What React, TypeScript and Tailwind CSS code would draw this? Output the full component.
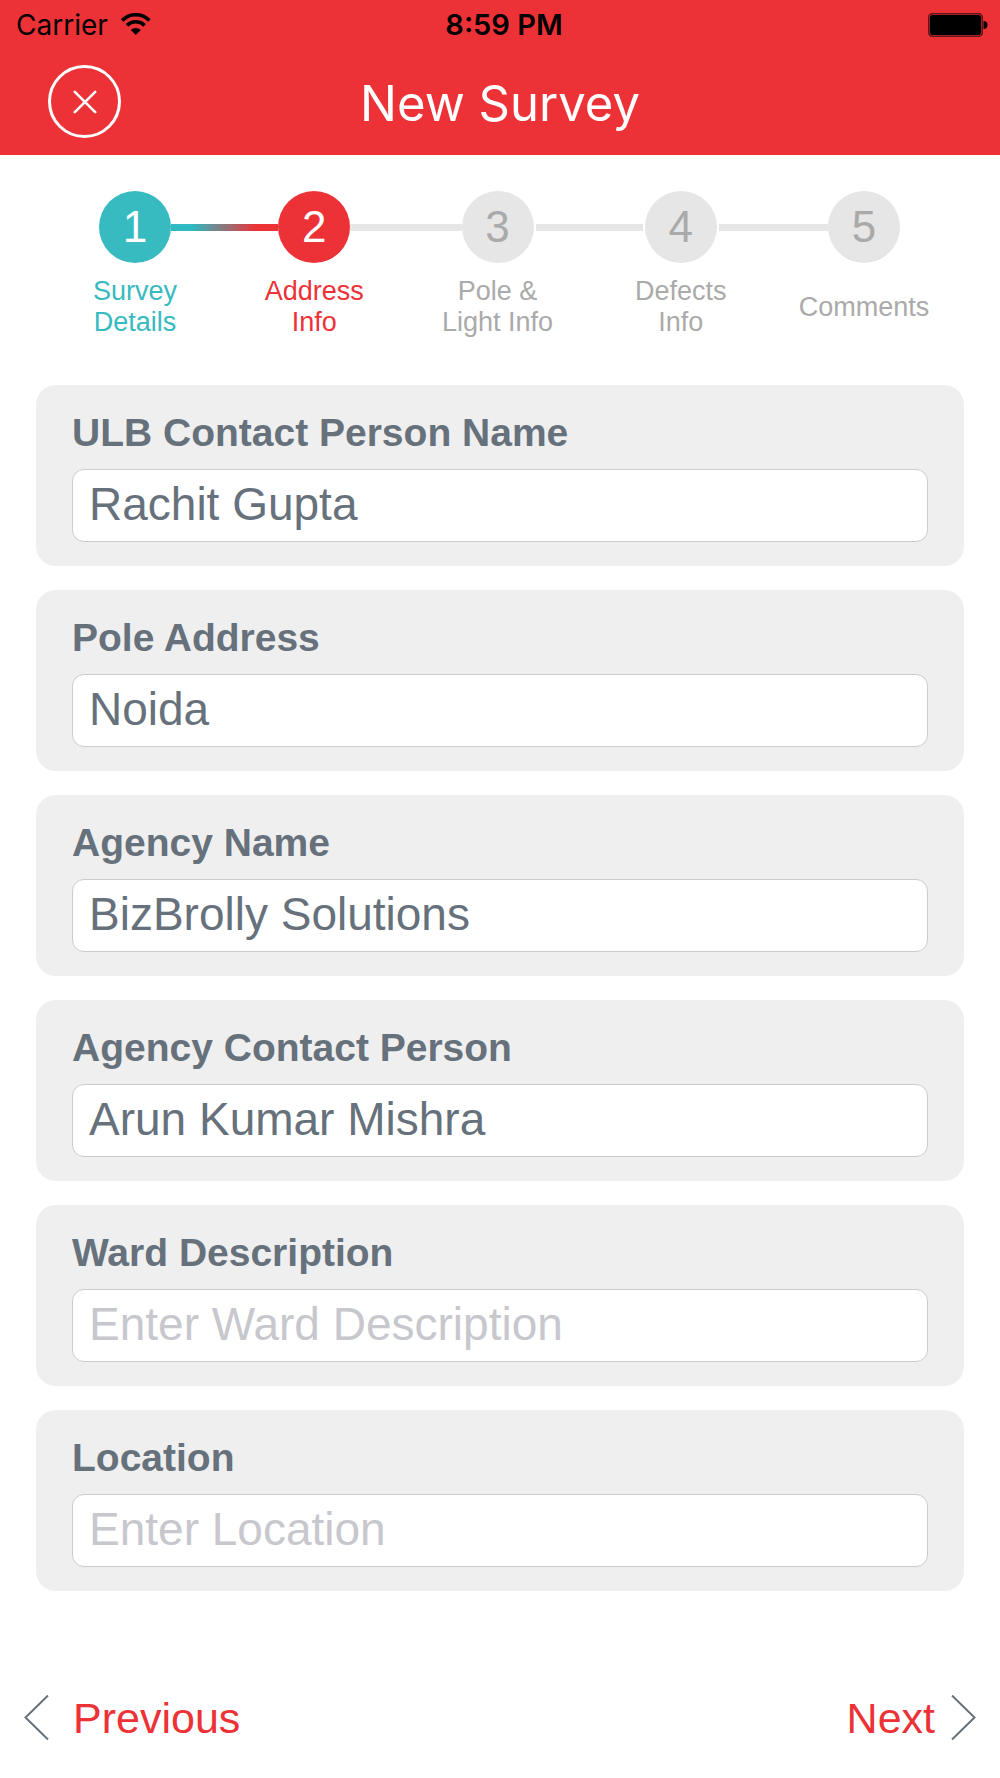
import { useState } from "react";
import clsx from "clsx";

type TStep = {
  title: string[];
  circle: string;
  text: string;
  grow?: string;
  line?: string;
};

type TField = {
  id: string;
  label: string;
  value: string;
};

const steps: TStep[] = [
  {
    title: ["Survey", "Details"],
    circle: "bg-[#37bac0] text-white",
    text: "text-[#37bac0]",
    grow: "basis-18 grow-[107]",
    line: "bg-linear-to-r/srgb from-[#2fb9c0] from-20% to-[#ed3237] to-80%",
  },
  {
    title: ["Address", "Info"],
    circle: "bg-[#ed3237] text-white",
    text: "text-[#ed3237]",
    grow: "basis-18 grow-[111]",
    line: "bg-[#e6e6e6]",
  },
  {
    title: ["Pole &", "Light Info"],
    circle: "bg-[#e6e6e6] text-[#aaaaaa]",
    text: "text-[#aaaaaa]",
    grow: "basis-18 grow-[111]",
    line: "border-x-2 border-white bg-[#e6e6e6]",
  },
  {
    title: ["Defects", "Info"],
    circle: "bg-[#e6e6e6] text-[#aaaaaa]",
    text: "text-[#aaaaaa]",
    grow: "basis-18 grow-[111]",
    line: "border-l-2 border-white bg-[#e6e6e6]",
  },
  {
    title: ["Comments"],
    circle: "bg-[#e6e6e6] text-[#aaaaaa]",
    text: "text-[#aaaaaa]",
  },
];

const initialFields: TField[] = [
  { id: "contactPerson", label: "ULB Contact Person Name", value: "Rachit Gupta" },
  { id: "poleAddress", label: "Pole Address", value: "Noida" },
  { id: "agencyName", label: "Agency Name", value: "BizBrolly Solutions" },
  { id: "agencyContact", label: "Agency Contact Person", value: "Arun Kumar Mishra" },
  { id: "ward", label: "Ward Description", value: "" },
  { id: "location", label: "Location", value: "" },
];

const StatusBar = () => (
  <div className="grid h-[50px] grid-cols-3 items-center pl-4 pr-3 text-[28px] leading-8 text-black">
    <div className="flex items-center gap-3">
      <span>Carrier</span>
      <svg width="32" height="24" viewBox="0 0 32 24" fill="none" aria-hidden="true">
        <path d="M2.2 7.4 A19.2 19.2 0 0 1 29.4 7.4" stroke="black" strokeWidth="3.6" />
        <path d="M7 12.4 A12.6 12.6 0 0 1 24.6 12.4" stroke="black" strokeWidth="3.6" />
        <path d="M15.8 22 L10.8 17 A7.1 7.1 0 0 1 20.8 17 Z" fill="black" />
      </svg>
    </div>
    <span className="pl-1 text-center text-[29px] font-semibold">8:59 PM</span>
    <svg className="justify-self-end" width="60" height="24" viewBox="0 0 60 24" aria-hidden="true">
      <rect x="0.8" y="0.8" width="53.4" height="22.4" rx="3.5" fill="#ed3237" stroke="#5e1518" strokeWidth="1.6" />
      <rect x="2" y="2" width="51" height="20" rx="2.5" fill="black" />
      <path d="M55.5 8 a4 4 0 0 1 0 8 Z" fill="black" />
    </svg>
  </div>
);

const Stepper = () => (
  <ol className="flex pl-[99px] pr-25 pt-9">
    {steps.map((step, index) => (
      <li key={step.title.join(" ")} className={clsx("flex", step.grow)}>
        <div className="flex w-18 shrink-0 flex-col items-center">
          <span className={clsx("flex size-18 items-center justify-center rounded-full text-[44px] leading-none", step.circle)}>
            {index + 1}
          </span>
          <div className={clsx("mt-[13px] flex h-[62px] flex-col justify-center text-center text-[27px] leading-[31px] whitespace-nowrap", step.text)}>
            {step.title.map((line) => (
              <span key={line}>{line}</span>
            ))}
          </div>
        </div>
        {step.line && <div className={clsx("mt-[33px] h-[7px] grow", step.line)} />}
      </li>
    ))}
  </ol>
);

const App = () => {
  const [fields, setFields] = useState(initialFields);

  const handleChange = (id: string, value: string) => {
    setFields(fields.map((field) => (field.id === id ? { ...field, value } : field)));
  };

  return (
    <div className="flex min-h-screen flex-col bg-white font-['Liberation_Sans',Arial,sans-serif]">
      <header className="h-[155px] bg-[#ed3237] font-[Inter,sans-serif]">
        <StatusBar />
        <div className="grid grid-cols-[1fr_auto_1fr] items-center px-12 pt-[15px]">
          <button
            type="button"
            aria-label="Close"
            className="flex size-[73px] items-center justify-center rounded-full border-3 border-white text-white"
          >
            <svg width="24" height="24" viewBox="0 0 24 24" stroke="currentColor" strokeWidth="2.6" strokeLinecap="round">
              <path d="M1.8 1.8 L22.2 22.2 M22.2 1.8 L1.8 22.2" />
            </svg>
          </button>
          <h1 className="pt-1 text-[49px] leading-15 text-white">New Survey</h1>
        </div>
      </header>

      <Stepper />

      <form className="mt-[47px] flex flex-col gap-6 px-9">
        {fields.map((field) => (
          <div key={field.id} className="rounded-[20px] bg-[#efefef] px-9 pt-6 pb-6">
            <label htmlFor={field.id} className="block text-[39px] leading-12 font-bold text-[#66717c]">
              {field.label}
            </label>
            <input
              id={field.id}
              type="text"
              value={field.value}
              placeholder={`Enter ${field.label}`}
              onChange={(e) => handleChange(field.id, e.target.value)}
              className="mt-3 block h-[73px] w-full rounded-xl border border-[#cccccc] bg-white px-4 pb-[3px] text-[46px] text-[#66717c] placeholder:text-[#c7c7cd]"
            />
          </div>
        ))}
      </form>

      <nav className="mt-auto flex items-center justify-between px-6 pb-8 text-[43px] leading-14 text-[#ed3237]">
        <button type="button" className="flex items-center gap-6">
          <svg width="25" height="46" viewBox="0 0 25 46" fill="none" stroke="#66717c" strokeWidth="2">
            <path d="M24 0.5 L1.5 22.5 L24 44.5" />
          </svg>
          Previous
        </button>
        <button type="button" className="flex items-center gap-4">
          Next
          <svg width="25" height="46" viewBox="0 0 25 46" fill="none" stroke="#66717c" strokeWidth="2">
            <path d="M1 0.5 L23.5 22.5 L1 44.5" />
          </svg>
        </button>
      </nav>
    </div>
  );
};

export default App;
